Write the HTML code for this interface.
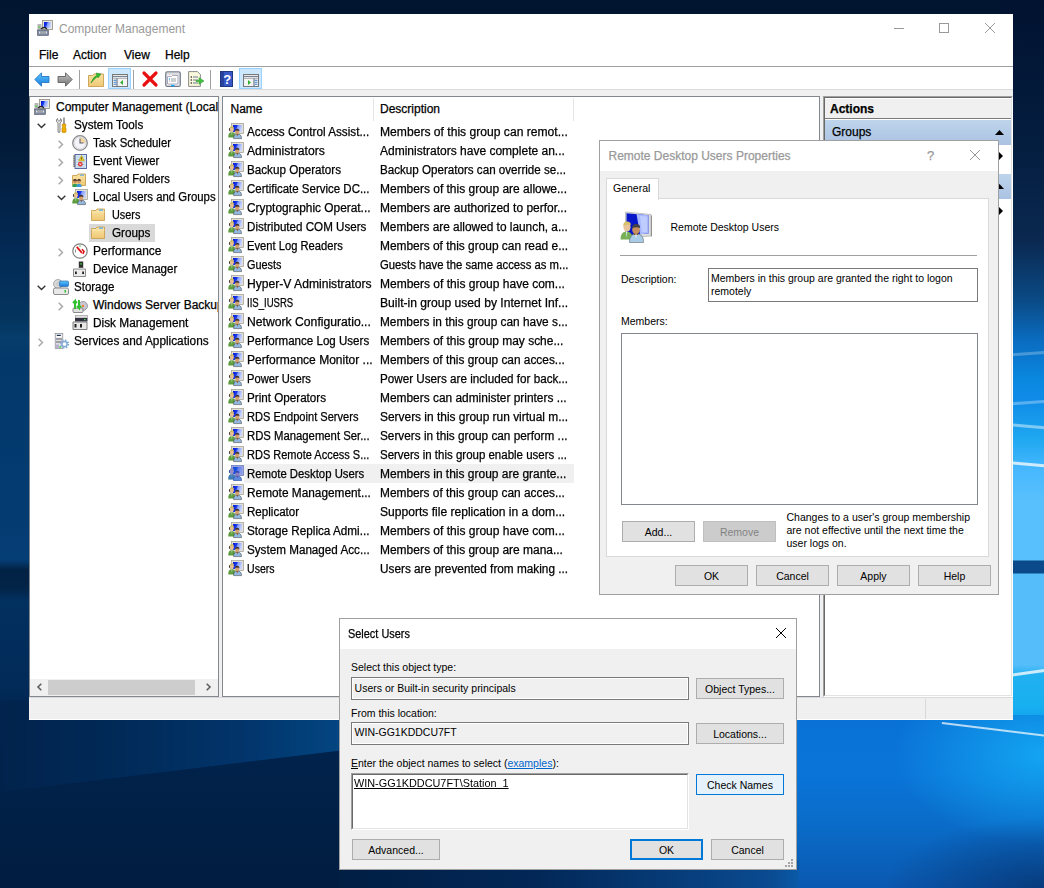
<!DOCTYPE html>
<html><head><meta charset="utf-8"><style>
*{margin:0;padding:0;box-sizing:border-box}
html,body{width:1044px;height:888px;overflow:hidden}
body{position:relative;font-family:"Liberation Sans",sans-serif;font-size:12px;color:#000;background:#04203f}
.a{position:absolute}
.t{position:absolute;white-space:nowrap;line-height:1;-webkit-text-stroke:0.25px currentColor}
svg.a{overflow:visible}
</style></head><body>
<svg width="0" height="0" style="position:absolute"><defs>
<linearGradient id="gscr" x1="0" y1="0" x2="1" y2="0.3"><stop offset="0" stop-color="#0010d8"/><stop offset=".45" stop-color="#2040e8"/><stop offset=".55" stop-color="#8098ff"/><stop offset="1" stop-color="#c8d4ff"/></linearGradient>
<linearGradient id="gfold" x1="0" y1="0" x2="0" y2="1"><stop offset="0" stop-color="#fbe4a6"/><stop offset="1" stop-color="#eec874"/></linearGradient>
<linearGradient id="gblue" x1="0" y1="0" x2="0" y2="1"><stop offset="0" stop-color="#5cc8ff"/><stop offset="1" stop-color="#1878d8"/></linearGradient>
<linearGradient id="ggray" x1="0" y1="0" x2="0" y2="1"><stop offset="0" stop-color="#c8c8c8"/><stop offset="1" stop-color="#707070"/></linearGradient>
<linearGradient id="gband" x1="0" y1="0" x2="0" y2="1"><stop offset="0" stop-color="#c5d8ee"/><stop offset="1" stop-color="#a9c3e2"/></linearGradient>
<filter id="tint" x="0" y="0" width="1" height="1"><feFlood flood-color="#1a5ce0" flood-opacity=".6"/><feComposite in2="SourceAlpha" operator="in" result="f"/><feMerge><feMergeNode in="SourceGraphic"/><feMergeNode in="f"/></feMerge></filter>
</defs></svg>
<div class="a" style="left:0;top:0;width:1044px;height:888px;overflow:hidden"><div class="a" style="left:0;top:0;width:1044px;height:888px;background:linear-gradient(180deg,#011530 0px,#021b3a 150px,#032a55 250px,#04355f 320px,#063d6c 338px,#03386a 360px,#043c72 520px,#053d75 560px,#022244 570px,#022447 588px,#02305f 600px,#022a58 690px,#01234c 720px,#012148 800px,#011c40 888px)"></div><div class="a" style="left:1000px;top:0;width:44px;height:888px;background:linear-gradient(180deg,#021230 0px,#041e40 150px,#0a2850 240px,#0a4a85 300px,#0a6cc0 340px,#0a88e0 380px,#108ce8 400px,#20a8f0 440px,#48b8ff 470px,#58c0fc 500px,#58c0fc 560px,#0a4a8a 561px,#0a4a8a 573px,#55bdfa 574px,#55bdfa 665px,#20b0f0 675px,#18b0f0 705px,#0a8ae8 745px,#0a80e0 790px,#0a78d0 800px,#0a5aa8 840px,#0a3a70 888px)"></div><div class="a" style="left:1005px;top:352px;width:50px;height:3px;background:rgba(255,255,255,0.25);transform:rotate(-4deg);filter:blur(.7px)"></div><div class="a" style="left:1005px;top:401px;width:50px;height:3px;background:rgba(255,255,255,0.3);transform:rotate(-4deg);filter:blur(.7px)"></div><div class="a" style="left:1005px;top:425px;width:50px;height:3px;background:rgba(255,255,255,0.45);transform:rotate(5deg);filter:blur(.7px)"></div><div class="a" style="left:1005px;top:463px;width:50px;height:3px;background:rgba(255,255,255,0.75);transform:rotate(5deg);filter:blur(.7px)"></div><div class="a" style="left:1005px;top:671px;width:50px;height:3px;background:rgba(255,255,255,0.75);transform:rotate(-8deg);filter:blur(.7px)"></div><div class="a" style="left:1005px;top:731px;width:50px;height:3px;background:rgba(255,255,255,0.4);transform:rotate(5deg);filter:blur(.7px)"></div><div class="a" style="left:790px;top:715px;width:254px;height:173px;background:linear-gradient(180deg,#0a72d6 0px,#0a74d8 60px,#0a6cc8 110px,#0a58b0 173px)"></div><div class="a" style="left:790px;top:715px;width:254px;height:173px;background:radial-gradient(ellipse 150px 90px at 254px 40px,rgba(20,170,245,.9),rgba(20,150,240,0) 100%)"></div><div class="a" style="left:790px;top:715px;width:254px;height:173px;background:radial-gradient(ellipse 160px 70px at 254px 173px,rgba(5,40,90,.6),rgba(5,40,90,0) 100%)"></div><div class="a" style="left:942px;top:722px;width:110px;height:2px;background:rgba(255,255,255,.7);transform:rotate(7deg);transform-origin:0 0;filter:blur(.6px)"></div><div class="a" style="left:339px;top:860px;width:460px;height:28px;background:linear-gradient(90deg,#011e43 0px,#022858 200px,#0a4a90 430px,#0a5aa8 460px)"></div><div class="a" style="left:0;top:700px;width:345px;height:100px;filter:blur(2px);clip-path:polygon(0 0,345px 0,345px 50px,0 92px);background:linear-gradient(90deg,#01234c 0px,#012a58 120px,#02346a 240px,#034682 345px)"></div></div>
<div class="a" style="left:29px;top:14px;width:984px;height:706px;background:#fff;"></div>
<svg class="a" style="left:37px;top:20px" width="16" height="16" viewBox="0 0 16 16"><rect x="5.5" y="0.5" width="10" height="9" fill="#e8e8e0" stroke="#8a8a80" stroke-width=".8"/><rect x="7" y="2" width="7" height="6" fill="url(#gscr)"/><rect x="0.5" y="4" width="4" height="6" fill="#b8b8b8"/><rect x="1.2" y="6.5" width="2" height="1.2" fill="#50d040"/><path d="M4 9 Q7 6 10 9" stroke="#222" stroke-width="1.2" fill="none"/><rect x="0.5" y="10" width="11" height="5.5" fill="#7b8aa0" stroke="#556" stroke-width=".6"/><rect x="2" y="11.5" width="8" height="2" fill="#e0e4ea"/><path d="M4 11.5v2M6 11.5v2M8 11.5v2" stroke="#333" stroke-width=".7"/></svg>
<div class="t" style="left:59px;top:22.84px;font-size:12px;color:#999;-webkit-text-stroke:0">Computer Management</div>
<svg class="a" style="left:894px;top:28px" width="10" height="1" viewBox="0 0 10 1"><rect width="10" height="1" fill="#999"/></svg>
<svg class="a" style="left:939px;top:23px" width="10" height="10" viewBox="0 0 10 10"><rect x=".5" y=".5" width="9" height="9" fill="none" stroke="#999"/></svg>
<svg class="a" style="left:985px;top:23px" width="10" height="10" viewBox="0 0 10 10"><path d="M0 0L10 10M10 0L0 10" stroke="#999" stroke-width="1"/></svg>
<div class="t" style="left:39px;top:48.54px;font-size:12px;color:#000;">File</div>
<div class="t" style="left:73px;top:48.54px;font-size:12px;color:#000;">Action</div>
<div class="t" style="left:124px;top:48.54px;font-size:12px;color:#000;">View</div>
<div class="t" style="left:165px;top:48.54px;font-size:12px;color:#000;">Help</div>
<div class="a" style="left:29px;top:66px;width:984px;height:1px;background:#a0a0a0;"></div>
<div class="a" style="left:29px;top:89px;width:984px;height:1px;background:#dadbdc;"></div>
<div class="a" style="left:29px;top:90px;width:984px;height:629px;background:#f0f0f0;"></div>
<div class="a" style="left:29px;top:96px;width:190px;height:601px;background:#fff;border:1px solid #828790;"></div>
<div class="a" style="left:222px;top:96px;width:598px;height:601px;background:#fff;border:1px solid #828790;"></div>
<div class="a" style="left:823px;top:96px;width:190px;height:601px;background:#fff;border-top:1px solid #a0a0a0;border-left:1px solid #a0a0a0;border-right:1px solid #fff;border-bottom:1px solid #fff"></div>
<div class="a" style="left:824px;top:97px;width:188px;height:599px;border-top:1px solid #696969;border-left:1px solid #696969;border-right:1px solid #e3e3e3;border-bottom:1px solid #e3e3e3"></div>
<div class="a" style="left:29px;top:697px;width:984px;height:1px;background:#d9d9d9;"></div>
<div class="a" style="left:925px;top:699px;width:1px;height:20px;background:#d9d9d9;"></div>
<svg class="a" style="left:34px;top:72px" width="16" height="15" viewBox="0 0 16 15"><path d="M0.8 7.5 L7.5 0.8 L7.5 4.5 L15 4.5 L15 10.5 L7.5 10.5 L7.5 14.2Z" fill="url(#gblue)" stroke="#2878c8" stroke-width=".9"/></svg>
<svg class="a" style="left:57px;top:72px" width="16" height="15" viewBox="0 0 16 15"><path d="M15.2 7.5 L8.5 0.8 L8.5 4.5 L1 4.5 L1 10.5 L8.5 10.5 L8.5 14.2Z" fill="url(#ggray)" stroke="#606060" stroke-width=".9"/></svg>
<div class="a" style="left:79px;top:70px;width:1px;height:19px;background:#a0a0a0;"></div>
<svg class="a" style="left:88px;top:71px" width="16" height="16" viewBox="0 0 16 16"><path d="M0.5 4.5 L5 4.5 L6 3 L15.5 3 L15.5 15.5 L0.5 15.5Z" fill="url(#gfold)" stroke="#c8a050" stroke-width=".9"/><path d="M3 12 Q5 6 9 4 L8 2 L13 3 L10 7 L9.5 5.5 Q6 8 3 12Z" fill="#30c030" stroke="#208020" stroke-width=".5"/></svg>
<div class="a" style="left:108px;top:68px;width:23px;height:21px;background:#cce8ff;border:1px solid #99d1ff;"></div>
<svg class="a" style="left:112px;top:74px" width="16" height="13" viewBox="0 0 16 13"><rect x=".5" y=".5" width="15" height="12" fill="#f4f4f4" stroke="#787878"/><path d="M1 1.6h14" stroke="#e8e8e8" stroke-width="1"/><path d="M1 2.6h15" stroke="#687890" stroke-width="1"/><path d="M1 3.6h14" stroke="#e0e0e0" stroke-width="1"/><path d="M1 4.5h14" stroke="#909090" stroke-width=".6"/><path d="M5 4.5v8" stroke="#687890" stroke-width="1.2"/><path d="M2 6.3h1.8M2 8.3h1.8M2 10.3h1.8" stroke="#3a80c8" stroke-width="1.1" stroke-linecap="round"/><path d="M11 6L8 8.5L11 11Z" fill="#30b030"/></svg>
<div class="a" style="left:133px;top:70px;width:1px;height:19px;background:#a0a0a0;"></div>
<svg class="a" style="left:142px;top:71px" width="16" height="16" viewBox="0 0 16 16"><path d="M2 2L14 14M14 2L2 14" stroke="#e81010" stroke-width="3.2" stroke-linecap="round"/></svg>
<svg class="a" style="left:165px;top:71px" width="16" height="16" viewBox="0 0 16 16"><rect x=".8" y=".8" width="14.4" height="14.6" rx="1.5" fill="#f8f8f8" stroke="#707888" stroke-width="1.3"/><path d="M2 3h12" stroke="#b0b0b8" stroke-width=".8"/><path d="M2.5 5.5h4l1 -1h5.5v8.5h-10.5Z" fill="#fff" stroke="#9890b0" stroke-width=".8"/><circle cx="4.5" cy="8" r=".7" fill="#10a0f0"/><path d="M6 8h5M6 10h5" stroke="#808890" stroke-width=".8"/><circle cx="4.5" cy="10" r=".6" fill="#909090"/><rect x="6" y="13.8" width="3.5" height="1.5" fill="#10a8f8"/></svg>
<svg class="a" style="left:188px;top:71px" width="17" height="16" viewBox="0 0 17 16"><path d="M.6 .6L9.5 .6L12.4 3.5L12.4 15.4L.6 15.4Z" fill="#fcf8dc" stroke="#8a8a8a" stroke-width="1"/><circle cx="3.3" cy="6" r=".8" fill="#222"/><circle cx="3.3" cy="9" r=".8" fill="#222"/><circle cx="3.3" cy="12" r=".8" fill="#222"/><path d="M5 6h5M5 9h5M5 12h5" stroke="#5a6a8a" stroke-width=".9"/><path d="M8 9.5h3v-2.8l5 3.3l-5 3.3v-2.8h-3Z" fill="#40c040" stroke="#30a030" stroke-width=".6"/></svg>
<div class="a" style="left:210px;top:70px;width:1px;height:19px;background:#a0a0a0;"></div>
<svg class="a" style="left:220px;top:71px" width="13" height="16" viewBox="0 0 13 16"><rect x=".5" y=".5" width="12" height="15" fill="#3858c8" stroke="#203880"/><rect x="1" y="1" width="3" height="14" fill="#2840a0"/><text x="7.3" y="13" font-family="Liberation Sans" font-weight="bold" font-size="13" fill="#fff" text-anchor="middle">?</text></svg>
<div class="a" style="left:239px;top:68px;width:23px;height:21px;background:#cce8ff;border:1px solid #99d1ff;"></div>
<svg class="a" style="left:243px;top:74px" width="16" height="13" viewBox="0 0 16 13"><rect x=".5" y=".5" width="15" height="12" fill="#f4f4f4" stroke="#787878"/><path d="M1 1.6h14" stroke="#e8e8e8" stroke-width="1"/><path d="M1 2.6h15" stroke="#687890" stroke-width="1"/><path d="M1 3.6h14" stroke="#e0e0e0" stroke-width="1"/><path d="M1 4.5h14" stroke="#909090" stroke-width=".6"/><path d="M11 4.5v8" stroke="#687890" stroke-width="1.2"/><path d="M12.3 6.3h1.8M12.3 8.3h1.8M12.3 10.3h1.8" stroke="#3a80c8" stroke-width="1.1" stroke-linecap="round"/><path d="M5 6L8 8.5L5 11Z" fill="#30b030"/></svg>
<div class="a" style="left:30px;top:97px;width:188px;height:582px;overflow:hidden"><div class="a" style="left:-30px;top:-97px;width:300px;height:700px"><div class="a" style="left:89px;top:224px;width:66px;height:18px;background:#d9d9d9;"></div><svg class="a" style="left:34px;top:99px" width="16" height="16" viewBox="0 0 16 16"><rect x="5.5" y="0.5" width="10" height="9" fill="#e8e8e0" stroke="#8a8a80" stroke-width=".8"/><rect x="7" y="2" width="7" height="6" fill="url(#gscr)"/><rect x="0.5" y="4" width="4" height="6" fill="#b8b8b8"/><rect x="1.2" y="6.5" width="2" height="1.2" fill="#50d040"/><path d="M4 9 Q7 6 10 9" stroke="#222" stroke-width="1.2" fill="none"/><rect x="0.5" y="10" width="11" height="5.5" fill="#7b8aa0" stroke="#556" stroke-width=".6"/><rect x="2" y="11.5" width="8" height="2" fill="#e0e4ea"/><path d="M4 11.5v2M6 11.5v2M8 11.5v2" stroke="#333" stroke-width=".7"/></svg><div class="t" style="left:56px;top:100.64px;font-size:12px;color:#000;transform:scaleX(1.0);transform-origin:0 0;">Computer Management (Local)</div><svg class="a" style="left:37px;top:123px" width="9" height="6" viewBox="0 0 9 6"><path d="M0.7 0.7 L4.5 4.5 L8.3 0.7" stroke="#333" stroke-width="1.4" fill="none"/></svg><svg class="a" style="left:55px;top:117px" width="12" height="16" viewBox="0 0 12 16"><path d="M2.5 1.5 Q1 2.5 1.5 4.5 Q2.2 5.8 3 6 L3 15 Q4 16 5 15 L5 6 Q6.2 5.5 6.5 4 Q6.7 2.2 5.5 1.5 L5.3 3.5 L3.8 4 L2.8 3.2Z" fill="#e4e4e4" stroke="#707070" stroke-width=".8"/><path d="M9 0.5 L9 7" stroke="#606060" stroke-width="1.2"/><path d="M7.5 7 L10.5 7 L11 9 L10 10 L11 11 L11 15 Q9 16.5 7 15 L7 11 L8 10 L7 9Z" fill="#f0b000" stroke="#c07800" stroke-width=".6"/></svg><div class="t" style="left:74px;top:118.64px;font-size:12px;color:#000;transform:scaleX(0.9732);transform-origin:0 0;">System Tools</div><svg class="a" style="left:58px;top:140px" width="6" height="9" viewBox="0 0 6 9"><path d="M0.7 0.7 L4.5 4.5 L0.7 8.3" stroke="#a6a6a6" stroke-width="1.4" fill="none"/></svg><svg class="a" style="left:72px;top:135px" width="16" height="16" viewBox="0 0 16 16"><circle cx="8" cy="8" r="7.3" fill="#f4f4f8" stroke="#8a8a8a" stroke-width="1.3"/><path d="M8 8 L8 2.2 A5.8 5.8 0 0 1 13.8 8Z" fill="#f2d8a0"/><circle cx="8" cy="8" r="5.8" fill="none" stroke="#c8c8d0" stroke-width=".6"/><path d="M8 3.5 L8 8 L11.5 8" stroke="#606070" stroke-width="1.1" fill="none"/></svg><div class="t" style="left:93px;top:136.64px;font-size:12px;color:#000;transform:scaleX(0.9512);transform-origin:0 0;">Task Scheduler</div><svg class="a" style="left:58px;top:158px" width="6" height="9" viewBox="0 0 6 9"><path d="M0.7 0.7 L4.5 4.5 L0.7 8.3" stroke="#a6a6a6" stroke-width="1.4" fill="none"/></svg><svg class="a" style="left:73px;top:154px" width="14" height="15" viewBox="0 0 14 15"><rect x="2" y="0.5" width="11.5" height="14" fill="#d4e6f4" stroke="#4a5a98" stroke-width=".9"/><path d="M3.5 3h8.5M3.5 5.5h8.5M3.5 8h8.5M3.5 10.5h8.5M3.5 13h8.5" stroke="#a8c8e0" stroke-width=".8"/><path d="M1.2 1.5v12" stroke="#606060" stroke-width="2" stroke-dasharray="1.2 .8"/><path d="M8.5 1.5 L11.3 6.8 L5.7 6.8Z" fill="#f0d020" stroke="#b09000" stroke-width=".5"/><path d="M8.5 3.5v2" stroke="#333" stroke-width=".8"/><circle cx="7.3" cy="10.2" r="2.4" fill="#e03a3a"/><path d="M6.4 9.3l1.8 1.8M8.2 9.3l-1.8 1.8" stroke="#fff" stroke-width=".7"/></svg><div class="t" style="left:93px;top:154.64px;font-size:12px;color:#000;transform:scaleX(0.9394);transform-origin:0 0;">Event Viewer</div><svg class="a" style="left:58px;top:176px" width="6" height="9" viewBox="0 0 6 9"><path d="M0.7 0.7 L4.5 4.5 L0.7 8.3" stroke="#a6a6a6" stroke-width="1.4" fill="none"/></svg><svg class="a" style="left:72px;top:173px" width="14" height="14" viewBox="0 0 14 14"><path d="M0.5 2.5 L5 2.5 L6 1 L13.5 1 L13.5 12.5 L0.5 12.5Z" fill="url(#gfold)" stroke="#c8a050" stroke-width=".9"/><rect x="8" y="1.6" width="4" height="1" fill="#40a0f0"/><path d="M0.3 14 Q0.3 10.8 3 10.8 Q5.7 10.8 5.7 14Z" fill="#30a050"/><circle cx="3" cy="8.3" r="1.9" fill="#c88858"/><path d="M1.1 8 Q1.2 6 3 6 Q4.9 6 4.9 8 Q3 7 1.1 8Z" fill="#302020"/><path d="M4.3 14 Q4.3 10.8 7 10.8 Q9.7 10.8 9.7 14Z" fill="#3a98d8"/><circle cx="7" cy="8.3" r="1.9" fill="#d09868"/><path d="M5.1 8 Q5.2 6 7 6 Q8.9 6 8.9 8 Q7 7 5.1 8Z" fill="#302020"/></svg><div class="t" style="left:93px;top:172.64px;font-size:12px;color:#000;transform:scaleX(0.9354);transform-origin:0 0;">Shared Folders</div><svg class="a" style="left:57px;top:195px" width="9" height="6" viewBox="0 0 9 6"><path d="M0.7 0.7 L4.5 4.5 L8.3 0.7" stroke="#333" stroke-width="1.4" fill="none"/></svg><svg class="a" style="left:72px;top:189px" width="16" height="16" viewBox="0 0 16 16"><rect x="3.5" y="0.5" width="12" height="10" fill="#e2e0d4" stroke="#9a9a90" stroke-width=".7"/><rect x="5" y="2" width="9" height="7" fill="url(#gscr)"/><path d="M0.3 14.5 Q0 9.3 3.8 9 Q7.5 9.3 7.2 14.5Z" fill="#5c9c3c"/><path d="M3.4 9.3 L4.2 9.3 L4 13 Z" fill="#e8f0e0"/><ellipse cx="3.9" cy="6.3" rx="2" ry="2.6" fill="#e8c090"/><path d="M1.6 5.6 Q1.8 3.2 4 3.3 Q6 3.4 6.1 5.3 Q4 4.2 1.6 5.6Z" fill="#c8b858"/><path d="M1.5 5.2 Q1 7.5 2.2 8.3" stroke="#202020" stroke-width=".9" fill="none"/><path d="M5.6 15.6 Q5.3 11.2 9.4 11 Q13.7 11.2 13.5 15.6Z" fill="#90b8e0" stroke="#303030" stroke-width=".5"/><ellipse cx="9.2" cy="8.6" rx="2.1" ry="2.7" fill="#d0a070"/><path d="M7 8 Q7 5.6 9.4 5.7 Q11.6 5.9 11.4 8 Q9.4 6.8 7 8Z" fill="#3a3030"/><path d="M8.4 11 L10.2 11 L9.3 13.6Z" fill="#8a5a30"/></svg><div class="t" style="left:93px;top:190.64px;font-size:12px;color:#000;transform:scaleX(0.9473);transform-origin:0 0;">Local Users and Groups</div><svg class="a" style="left:91px;top:208px" width="14" height="13" viewBox="0 0 14 13"><path d="M0.5 2.5 L5 2.5 L6 1 L13.5 1 L13.5 12.5 L0.5 12.5Z" fill="url(#gfold)" stroke="#c8a050" stroke-width=".9"/><rect x="8" y="1.5" width="4" height="1.2" fill="#4aa8f0"/><path d="M0.5 4 L13.5 4" stroke="#f8e8b8" stroke-width=".8"/></svg><div class="t" style="left:112px;top:208.64px;font-size:12px;color:#000;transform:scaleX(0.9032);transform-origin:0 0;">Users</div><svg class="a" style="left:91px;top:226px" width="14" height="13" viewBox="0 0 14 13"><path d="M0.5 2.5 L5 2.5 L6 1 L13.5 1 L13.5 12.5 L0.5 12.5Z" fill="url(#gfold)" stroke="#c8a050" stroke-width=".9"/><rect x="8" y="1.5" width="4" height="1.2" fill="#4aa8f0"/><path d="M0.5 4 L13.5 4" stroke="#f8e8b8" stroke-width=".8"/></svg><div class="t" style="left:112px;top:226.64px;font-size:12px;color:#000;transform:scaleX(0.9769);transform-origin:0 0;">Groups</div><svg class="a" style="left:58px;top:248px" width="6" height="9" viewBox="0 0 6 9"><path d="M0.7 0.7 L4.5 4.5 L0.7 8.3" stroke="#a6a6a6" stroke-width="1.4" fill="none"/></svg><svg class="a" style="left:72px;top:243px" width="16" height="16" viewBox="0 0 16 16"><circle cx="8" cy="8" r="7.2" fill="#fff" stroke="#808080" stroke-width="1.2"/><path d="M3.5 6.5v3" stroke="#606060" stroke-width=".7"/><path d="M7 3 L9 3" stroke="#40a040" stroke-width=".8"/><path d="M4.8 3.8 L10 10" stroke="#e01010" stroke-width="1.8" fill="none"/><path d="M10 6.2 L12 8.5 L11 11" stroke="#e01010" stroke-width="1.5" fill="none"/></svg><div class="t" style="left:93px;top:244.64px;font-size:12px;color:#000;transform:scaleX(0.9971);transform-origin:0 0;">Performance</div><svg class="a" style="left:72px;top:261px" width="16" height="16" viewBox="0 0 16 16"><rect x="6.8" y="0.5" width="4.4" height="7" fill="#303030"/><rect x="8.3" y="2.2" width="1.4" height="1.4" fill="#40e040"/><path d="M1.5 8 L13.5 8 L13.5 15.5 L1.5 15.5Z" fill="#ececec" stroke="#808080" stroke-width=".9"/><path d="M6 8 L7 6.8 L11 6.8 L12 8" fill="#d0d0d0"/><rect x="3" y="10.5" width="1.8" height="2.6" fill="#222"/><rect x="10.2" y="10.5" width="1.8" height="2.6" fill="#222"/></svg><div class="t" style="left:93px;top:262.64px;font-size:12px;color:#000;transform:scaleX(0.9648);transform-origin:0 0;">Device Manager</div><svg class="a" style="left:37px;top:285px" width="9" height="6" viewBox="0 0 9 6"><path d="M0.7 0.7 L4.5 4.5 L8.3 0.7" stroke="#333" stroke-width="1.4" fill="none"/></svg><svg class="a" style="left:53px;top:279px" width="16" height="16" viewBox="0 0 16 16"><circle cx="5" cy="5" r="4.5" fill="#d8d8d8" stroke="#909090" stroke-width=".7"/><circle cx="5" cy="5" r="1.2" fill="#fff" stroke="#888" stroke-width=".5"/><rect x="6.5" y="2" width="9" height="5.5" rx="1" fill="url(#gblue)" stroke="#2060a0" stroke-width=".6"/><rect x="0.5" y="9" width="15" height="6.5" rx="1.5" fill="#e8e8e8" stroke="#808080" stroke-width=".9"/><rect x="11.5" y="11" width="1.5" height="2.5" fill="#30c030"/></svg><div class="t" style="left:74px;top:280.64px;font-size:12px;color:#000;transform:scaleX(0.9595);transform-origin:0 0;">Storage</div><svg class="a" style="left:58px;top:302px" width="6" height="9" viewBox="0 0 6 9"><path d="M0.7 0.7 L4.5 4.5 L0.7 8.3" stroke="#a6a6a6" stroke-width="1.4" fill="none"/></svg><svg class="a" style="left:72px;top:297px" width="16" height="16" viewBox="0 0 16 16"><circle cx="11" cy="9" r="4.5" fill="#c8c8d0" stroke="#808090" stroke-width=".7"/><circle cx="11" cy="9" r="1.2" fill="#f08040"/><rect x="1" y="11" width="10" height="4.5" rx="1" fill="#e0e0e0" stroke="#707070" stroke-width=".8"/><path d="M3 12 L3 4 L1 6 M3 4 L5 6" stroke="#30c030" stroke-width="2" fill="none"/><path d="M7 3 L7 11 L5 9 M7 11 L9 9" stroke="#30c030" stroke-width="2" fill="none"/></svg><div class="t" style="left:93px;top:298.64px;font-size:12px;color:#000;transform:scaleX(1.0);transform-origin:0 0;">Windows Server Backup</div><svg class="a" style="left:72px;top:315px" width="16" height="16" viewBox="0 0 16 16"><rect x="3.5" y="0.5" width="12" height="2.5" fill="#e0e0e0" stroke="#909090" stroke-width=".6"/><rect x="3" y="3" width="12.5" height="3.5" fill="#303040"/><rect x="12" y="4" width="1.5" height="1.2" fill="#40e040"/><path d="M1 7 L15 7 L15 14.5 L1 14.5Z" fill="#e8e8e8" stroke="#707070" stroke-width=".9"/><rect x="2.5" y="9" width="2" height="3.5" fill="#222"/><rect x="8" y="9" width="2" height="3.5" fill="#222"/></svg><div class="t" style="left:93px;top:316.64px;font-size:12px;color:#000;transform:scaleX(0.9866);transform-origin:0 0;">Disk Management</div><svg class="a" style="left:38px;top:338px" width="6" height="9" viewBox="0 0 6 9"><path d="M0.7 0.7 L4.5 4.5 L0.7 8.3" stroke="#a6a6a6" stroke-width="1.4" fill="none"/></svg><svg class="a" style="left:54px;top:333px" width="16" height="16" viewBox="0 0 16 16"><rect x="1.2" y="0.5" width="7.6" height="15" fill="#e0e0e4" stroke="#8a8a96" stroke-width=".7"/><rect x="2.3" y="1.5" width="5.4" height="3" fill="#fff"/><rect x="2.8" y="1.8" width="4" height="1.2" fill="#203050"/><path d="M2 6h6M2 9h6" stroke="#505060" stroke-width=".9"/><rect x="2" y="11.5" width="3" height="3.5" fill="#b8b0d0"/><rect x="5.2" y="13.2" width="2" height="1.5" fill="#40e040"/><circle cx="10.5" cy="11" r="3.7" fill="none" stroke="#86acd6" stroke-width="2" stroke-dasharray="1.45 1.45"/><circle cx="10.5" cy="11" r="2.6" fill="#fff" stroke="#86acd6" stroke-width="1.5"/></svg><div class="t" style="left:74px;top:334.64px;font-size:12px;color:#000;transform:scaleX(0.9846);transform-origin:0 0;">Services and Applications</div></div></div>
<div class="a" style="left:30px;top:679px;width:188px;height:17px;background:#f0f0f0;"></div>
<div class="a" style="left:48px;top:680px;width:147px;height:15px;background:#cdcdcd;"></div>
<svg class="a" style="left:37px;top:683px" width="5" height="8" viewBox="0 0 5 8"><path d="M4.3 .7L1 4L4.3 7.3" stroke="#606060" stroke-width="1.6" fill="none"/></svg>
<svg class="a" style="left:206px;top:683px" width="5" height="8" viewBox="0 0 5 8"><path d="M.7 .7L4 4L.7 7.3" stroke="#606060" stroke-width="1.6" fill="none"/></svg>
<div class="a" style="left:373px;top:98px;width:1px;height:23px;background:#e5e5e5;"></div>
<div class="a" style="left:573px;top:98px;width:1px;height:23px;background:#e5e5e5;"></div>
<div class="t" style="left:230.5px;top:103.34px;font-size:12px;color:#000;">Name</div>
<div class="t" style="left:380px;top:103.34px;font-size:12px;color:#000;">Description</div>
<svg class="a" style="left:228px;top:123px" width="16" height="16" viewBox="0 0 16 16"><rect x="3.5" y="0.5" width="12" height="10" fill="#e2e0d4" stroke="#9a9a90" stroke-width=".7"/><rect x="5" y="2" width="9" height="7" fill="url(#gscr)"/><path d="M0.3 14.5 Q0 9.3 3.8 9 Q7.5 9.3 7.2 14.5Z" fill="#5c9c3c"/><path d="M3.4 9.3 L4.2 9.3 L4 13 Z" fill="#e8f0e0"/><ellipse cx="3.9" cy="6.3" rx="2" ry="2.6" fill="#e8c090"/><path d="M1.6 5.6 Q1.8 3.2 4 3.3 Q6 3.4 6.1 5.3 Q4 4.2 1.6 5.6Z" fill="#c8b858"/><path d="M1.5 5.2 Q1 7.5 2.2 8.3" stroke="#202020" stroke-width=".9" fill="none"/><path d="M5.6 15.6 Q5.3 11.2 9.4 11 Q13.7 11.2 13.5 15.6Z" fill="#90b8e0" stroke="#303030" stroke-width=".5"/><ellipse cx="9.2" cy="8.6" rx="2.1" ry="2.7" fill="#d0a070"/><path d="M7 8 Q7 5.6 9.4 5.7 Q11.6 5.9 11.4 8 Q9.4 6.8 7 8Z" fill="#3a3030"/><path d="M8.4 11 L10.2 11 L9.3 13.6Z" fill="#8a5a30"/></svg>
<div class="t" style="left:246.5px;top:125.84px;font-size:12px;color:#000;transform:scaleX(0.9742);transform-origin:0 0;">Access Control Assist...</div>
<div class="t" style="left:380px;top:125.84px;font-size:12px;color:#000;transform:scaleX(1.0092);transform-origin:0 0;">Members of this group can remot...</div>
<svg class="a" style="left:228px;top:142px" width="16" height="16" viewBox="0 0 16 16"><rect x="3.5" y="0.5" width="12" height="10" fill="#e2e0d4" stroke="#9a9a90" stroke-width=".7"/><rect x="5" y="2" width="9" height="7" fill="url(#gscr)"/><path d="M0.3 14.5 Q0 9.3 3.8 9 Q7.5 9.3 7.2 14.5Z" fill="#5c9c3c"/><path d="M3.4 9.3 L4.2 9.3 L4 13 Z" fill="#e8f0e0"/><ellipse cx="3.9" cy="6.3" rx="2" ry="2.6" fill="#e8c090"/><path d="M1.6 5.6 Q1.8 3.2 4 3.3 Q6 3.4 6.1 5.3 Q4 4.2 1.6 5.6Z" fill="#c8b858"/><path d="M1.5 5.2 Q1 7.5 2.2 8.3" stroke="#202020" stroke-width=".9" fill="none"/><path d="M5.6 15.6 Q5.3 11.2 9.4 11 Q13.7 11.2 13.5 15.6Z" fill="#90b8e0" stroke="#303030" stroke-width=".5"/><ellipse cx="9.2" cy="8.6" rx="2.1" ry="2.7" fill="#d0a070"/><path d="M7 8 Q7 5.6 9.4 5.7 Q11.6 5.9 11.4 8 Q9.4 6.8 7 8Z" fill="#3a3030"/><path d="M8.4 11 L10.2 11 L9.3 13.6Z" fill="#8a5a30"/></svg>
<div class="t" style="left:246.5px;top:144.84px;font-size:12px;color:#000;transform:scaleX(1.0145);transform-origin:0 0;">Administrators</div>
<div class="t" style="left:380px;top:144.84px;font-size:12px;color:#000;transform:scaleX(1.0005);transform-origin:0 0;">Administrators have complete an...</div>
<svg class="a" style="left:228px;top:161px" width="16" height="16" viewBox="0 0 16 16"><rect x="3.5" y="0.5" width="12" height="10" fill="#e2e0d4" stroke="#9a9a90" stroke-width=".7"/><rect x="5" y="2" width="9" height="7" fill="url(#gscr)"/><path d="M0.3 14.5 Q0 9.3 3.8 9 Q7.5 9.3 7.2 14.5Z" fill="#5c9c3c"/><path d="M3.4 9.3 L4.2 9.3 L4 13 Z" fill="#e8f0e0"/><ellipse cx="3.9" cy="6.3" rx="2" ry="2.6" fill="#e8c090"/><path d="M1.6 5.6 Q1.8 3.2 4 3.3 Q6 3.4 6.1 5.3 Q4 4.2 1.6 5.6Z" fill="#c8b858"/><path d="M1.5 5.2 Q1 7.5 2.2 8.3" stroke="#202020" stroke-width=".9" fill="none"/><path d="M5.6 15.6 Q5.3 11.2 9.4 11 Q13.7 11.2 13.5 15.6Z" fill="#90b8e0" stroke="#303030" stroke-width=".5"/><ellipse cx="9.2" cy="8.6" rx="2.1" ry="2.7" fill="#d0a070"/><path d="M7 8 Q7 5.6 9.4 5.7 Q11.6 5.9 11.4 8 Q9.4 6.8 7 8Z" fill="#3a3030"/><path d="M8.4 11 L10.2 11 L9.3 13.6Z" fill="#8a5a30"/></svg>
<div class="t" style="left:246.5px;top:163.84px;font-size:12px;color:#000;transform:scaleX(0.9719);transform-origin:0 0;">Backup Operators</div>
<div class="t" style="left:380px;top:163.84px;font-size:12px;color:#000;transform:scaleX(0.9681);transform-origin:0 0;">Backup Operators can override se...</div>
<svg class="a" style="left:228px;top:180px" width="16" height="16" viewBox="0 0 16 16"><rect x="3.5" y="0.5" width="12" height="10" fill="#e2e0d4" stroke="#9a9a90" stroke-width=".7"/><rect x="5" y="2" width="9" height="7" fill="url(#gscr)"/><path d="M0.3 14.5 Q0 9.3 3.8 9 Q7.5 9.3 7.2 14.5Z" fill="#5c9c3c"/><path d="M3.4 9.3 L4.2 9.3 L4 13 Z" fill="#e8f0e0"/><ellipse cx="3.9" cy="6.3" rx="2" ry="2.6" fill="#e8c090"/><path d="M1.6 5.6 Q1.8 3.2 4 3.3 Q6 3.4 6.1 5.3 Q4 4.2 1.6 5.6Z" fill="#c8b858"/><path d="M1.5 5.2 Q1 7.5 2.2 8.3" stroke="#202020" stroke-width=".9" fill="none"/><path d="M5.6 15.6 Q5.3 11.2 9.4 11 Q13.7 11.2 13.5 15.6Z" fill="#90b8e0" stroke="#303030" stroke-width=".5"/><ellipse cx="9.2" cy="8.6" rx="2.1" ry="2.7" fill="#d0a070"/><path d="M7 8 Q7 5.6 9.4 5.7 Q11.6 5.9 11.4 8 Q9.4 6.8 7 8Z" fill="#3a3030"/><path d="M8.4 11 L10.2 11 L9.3 13.6Z" fill="#8a5a30"/></svg>
<div class="t" style="left:246.5px;top:182.84px;font-size:12px;color:#000;transform:scaleX(0.9567);transform-origin:0 0;">Certificate Service DC...</div>
<div class="t" style="left:380px;top:182.84px;font-size:12px;color:#000;transform:scaleX(0.9978);transform-origin:0 0;">Members of this group are allowe...</div>
<svg class="a" style="left:228px;top:199px" width="16" height="16" viewBox="0 0 16 16"><rect x="3.5" y="0.5" width="12" height="10" fill="#e2e0d4" stroke="#9a9a90" stroke-width=".7"/><rect x="5" y="2" width="9" height="7" fill="url(#gscr)"/><path d="M0.3 14.5 Q0 9.3 3.8 9 Q7.5 9.3 7.2 14.5Z" fill="#5c9c3c"/><path d="M3.4 9.3 L4.2 9.3 L4 13 Z" fill="#e8f0e0"/><ellipse cx="3.9" cy="6.3" rx="2" ry="2.6" fill="#e8c090"/><path d="M1.6 5.6 Q1.8 3.2 4 3.3 Q6 3.4 6.1 5.3 Q4 4.2 1.6 5.6Z" fill="#c8b858"/><path d="M1.5 5.2 Q1 7.5 2.2 8.3" stroke="#202020" stroke-width=".9" fill="none"/><path d="M5.6 15.6 Q5.3 11.2 9.4 11 Q13.7 11.2 13.5 15.6Z" fill="#90b8e0" stroke="#303030" stroke-width=".5"/><ellipse cx="9.2" cy="8.6" rx="2.1" ry="2.7" fill="#d0a070"/><path d="M7 8 Q7 5.6 9.4 5.7 Q11.6 5.9 11.4 8 Q9.4 6.8 7 8Z" fill="#3a3030"/><path d="M8.4 11 L10.2 11 L9.3 13.6Z" fill="#8a5a30"/></svg>
<div class="t" style="left:246.5px;top:201.84px;font-size:12px;color:#000;transform:scaleX(0.9903);transform-origin:0 0;">Cryptographic Operat...</div>
<div class="t" style="left:380px;top:201.84px;font-size:12px;color:#000;transform:scaleX(0.9978);transform-origin:0 0;">Members are authorized to perfor...</div>
<svg class="a" style="left:228px;top:218px" width="16" height="16" viewBox="0 0 16 16"><rect x="3.5" y="0.5" width="12" height="10" fill="#e2e0d4" stroke="#9a9a90" stroke-width=".7"/><rect x="5" y="2" width="9" height="7" fill="url(#gscr)"/><path d="M0.3 14.5 Q0 9.3 3.8 9 Q7.5 9.3 7.2 14.5Z" fill="#5c9c3c"/><path d="M3.4 9.3 L4.2 9.3 L4 13 Z" fill="#e8f0e0"/><ellipse cx="3.9" cy="6.3" rx="2" ry="2.6" fill="#e8c090"/><path d="M1.6 5.6 Q1.8 3.2 4 3.3 Q6 3.4 6.1 5.3 Q4 4.2 1.6 5.6Z" fill="#c8b858"/><path d="M1.5 5.2 Q1 7.5 2.2 8.3" stroke="#202020" stroke-width=".9" fill="none"/><path d="M5.6 15.6 Q5.3 11.2 9.4 11 Q13.7 11.2 13.5 15.6Z" fill="#90b8e0" stroke="#303030" stroke-width=".5"/><ellipse cx="9.2" cy="8.6" rx="2.1" ry="2.7" fill="#d0a070"/><path d="M7 8 Q7 5.6 9.4 5.7 Q11.6 5.9 11.4 8 Q9.4 6.8 7 8Z" fill="#3a3030"/><path d="M8.4 11 L10.2 11 L9.3 13.6Z" fill="#8a5a30"/></svg>
<div class="t" style="left:246.5px;top:220.84px;font-size:12px;color:#000;transform:scaleX(0.9675);transform-origin:0 0;">Distributed COM Users</div>
<div class="t" style="left:380px;top:220.84px;font-size:12px;color:#000;transform:scaleX(0.9878);transform-origin:0 0;">Members are allowed to launch, a...</div>
<svg class="a" style="left:228px;top:237px" width="16" height="16" viewBox="0 0 16 16"><rect x="3.5" y="0.5" width="12" height="10" fill="#e2e0d4" stroke="#9a9a90" stroke-width=".7"/><rect x="5" y="2" width="9" height="7" fill="url(#gscr)"/><path d="M0.3 14.5 Q0 9.3 3.8 9 Q7.5 9.3 7.2 14.5Z" fill="#5c9c3c"/><path d="M3.4 9.3 L4.2 9.3 L4 13 Z" fill="#e8f0e0"/><ellipse cx="3.9" cy="6.3" rx="2" ry="2.6" fill="#e8c090"/><path d="M1.6 5.6 Q1.8 3.2 4 3.3 Q6 3.4 6.1 5.3 Q4 4.2 1.6 5.6Z" fill="#c8b858"/><path d="M1.5 5.2 Q1 7.5 2.2 8.3" stroke="#202020" stroke-width=".9" fill="none"/><path d="M5.6 15.6 Q5.3 11.2 9.4 11 Q13.7 11.2 13.5 15.6Z" fill="#90b8e0" stroke="#303030" stroke-width=".5"/><ellipse cx="9.2" cy="8.6" rx="2.1" ry="2.7" fill="#d0a070"/><path d="M7 8 Q7 5.6 9.4 5.7 Q11.6 5.9 11.4 8 Q9.4 6.8 7 8Z" fill="#3a3030"/><path d="M8.4 11 L10.2 11 L9.3 13.6Z" fill="#8a5a30"/></svg>
<div class="t" style="left:246.5px;top:239.84px;font-size:12px;color:#000;transform:scaleX(0.9324);transform-origin:0 0;">Event Log Readers</div>
<div class="t" style="left:380px;top:239.84px;font-size:12px;color:#000;transform:scaleX(0.9931);transform-origin:0 0;">Members of this group can read e...</div>
<svg class="a" style="left:228px;top:256px" width="16" height="16" viewBox="0 0 16 16"><rect x="3.5" y="0.5" width="12" height="10" fill="#e2e0d4" stroke="#9a9a90" stroke-width=".7"/><rect x="5" y="2" width="9" height="7" fill="url(#gscr)"/><path d="M0.3 14.5 Q0 9.3 3.8 9 Q7.5 9.3 7.2 14.5Z" fill="#5c9c3c"/><path d="M3.4 9.3 L4.2 9.3 L4 13 Z" fill="#e8f0e0"/><ellipse cx="3.9" cy="6.3" rx="2" ry="2.6" fill="#e8c090"/><path d="M1.6 5.6 Q1.8 3.2 4 3.3 Q6 3.4 6.1 5.3 Q4 4.2 1.6 5.6Z" fill="#c8b858"/><path d="M1.5 5.2 Q1 7.5 2.2 8.3" stroke="#202020" stroke-width=".9" fill="none"/><path d="M5.6 15.6 Q5.3 11.2 9.4 11 Q13.7 11.2 13.5 15.6Z" fill="#90b8e0" stroke="#303030" stroke-width=".5"/><ellipse cx="9.2" cy="8.6" rx="2.1" ry="2.7" fill="#d0a070"/><path d="M7 8 Q7 5.6 9.4 5.7 Q11.6 5.9 11.4 8 Q9.4 6.8 7 8Z" fill="#3a3030"/><path d="M8.4 11 L10.2 11 L9.3 13.6Z" fill="#8a5a30"/></svg>
<div class="t" style="left:246.5px;top:258.84px;font-size:12px;color:#000;transform:scaleX(0.9053);transform-origin:0 0;">Guests</div>
<div class="t" style="left:380px;top:258.84px;font-size:12px;color:#000;transform:scaleX(0.9417);transform-origin:0 0;">Guests have the same access as m...</div>
<svg class="a" style="left:228px;top:275px" width="16" height="16" viewBox="0 0 16 16"><rect x="3.5" y="0.5" width="12" height="10" fill="#e2e0d4" stroke="#9a9a90" stroke-width=".7"/><rect x="5" y="2" width="9" height="7" fill="url(#gscr)"/><path d="M0.3 14.5 Q0 9.3 3.8 9 Q7.5 9.3 7.2 14.5Z" fill="#5c9c3c"/><path d="M3.4 9.3 L4.2 9.3 L4 13 Z" fill="#e8f0e0"/><ellipse cx="3.9" cy="6.3" rx="2" ry="2.6" fill="#e8c090"/><path d="M1.6 5.6 Q1.8 3.2 4 3.3 Q6 3.4 6.1 5.3 Q4 4.2 1.6 5.6Z" fill="#c8b858"/><path d="M1.5 5.2 Q1 7.5 2.2 8.3" stroke="#202020" stroke-width=".9" fill="none"/><path d="M5.6 15.6 Q5.3 11.2 9.4 11 Q13.7 11.2 13.5 15.6Z" fill="#90b8e0" stroke="#303030" stroke-width=".5"/><ellipse cx="9.2" cy="8.6" rx="2.1" ry="2.7" fill="#d0a070"/><path d="M7 8 Q7 5.6 9.4 5.7 Q11.6 5.9 11.4 8 Q9.4 6.8 7 8Z" fill="#3a3030"/><path d="M8.4 11 L10.2 11 L9.3 13.6Z" fill="#8a5a30"/></svg>
<div class="t" style="left:246.5px;top:277.84px;font-size:12px;color:#000;transform:scaleX(1.0089);transform-origin:0 0;">Hyper-V Administrators</div>
<div class="t" style="left:380px;top:277.84px;font-size:12px;color:#000;transform:scaleX(1.0005);transform-origin:0 0;">Members of this group have com...</div>
<svg class="a" style="left:228px;top:294px" width="16" height="16" viewBox="0 0 16 16"><rect x="3.5" y="0.5" width="12" height="10" fill="#e2e0d4" stroke="#9a9a90" stroke-width=".7"/><rect x="5" y="2" width="9" height="7" fill="url(#gscr)"/><path d="M0.3 14.5 Q0 9.3 3.8 9 Q7.5 9.3 7.2 14.5Z" fill="#5c9c3c"/><path d="M3.4 9.3 L4.2 9.3 L4 13 Z" fill="#e8f0e0"/><ellipse cx="3.9" cy="6.3" rx="2" ry="2.6" fill="#e8c090"/><path d="M1.6 5.6 Q1.8 3.2 4 3.3 Q6 3.4 6.1 5.3 Q4 4.2 1.6 5.6Z" fill="#c8b858"/><path d="M1.5 5.2 Q1 7.5 2.2 8.3" stroke="#202020" stroke-width=".9" fill="none"/><path d="M5.6 15.6 Q5.3 11.2 9.4 11 Q13.7 11.2 13.5 15.6Z" fill="#90b8e0" stroke="#303030" stroke-width=".5"/><ellipse cx="9.2" cy="8.6" rx="2.1" ry="2.7" fill="#d0a070"/><path d="M7 8 Q7 5.6 9.4 5.7 Q11.6 5.9 11.4 8 Q9.4 6.8 7 8Z" fill="#3a3030"/><path d="M8.4 11 L10.2 11 L9.3 13.6Z" fill="#8a5a30"/></svg>
<div class="t" style="left:246.5px;top:296.84px;font-size:12px;color:#000;transform:scaleX(0.7966);transform-origin:0 0;">IIS_IUSRS</div>
<div class="t" style="left:380px;top:296.84px;font-size:12px;color:#000;transform:scaleX(1.0075);transform-origin:0 0;">Built-in group used by Internet Inf...</div>
<svg class="a" style="left:228px;top:313px" width="16" height="16" viewBox="0 0 16 16"><rect x="3.5" y="0.5" width="12" height="10" fill="#e2e0d4" stroke="#9a9a90" stroke-width=".7"/><rect x="5" y="2" width="9" height="7" fill="url(#gscr)"/><path d="M0.3 14.5 Q0 9.3 3.8 9 Q7.5 9.3 7.2 14.5Z" fill="#5c9c3c"/><path d="M3.4 9.3 L4.2 9.3 L4 13 Z" fill="#e8f0e0"/><ellipse cx="3.9" cy="6.3" rx="2" ry="2.6" fill="#e8c090"/><path d="M1.6 5.6 Q1.8 3.2 4 3.3 Q6 3.4 6.1 5.3 Q4 4.2 1.6 5.6Z" fill="#c8b858"/><path d="M1.5 5.2 Q1 7.5 2.2 8.3" stroke="#202020" stroke-width=".9" fill="none"/><path d="M5.6 15.6 Q5.3 11.2 9.4 11 Q13.7 11.2 13.5 15.6Z" fill="#90b8e0" stroke="#303030" stroke-width=".5"/><ellipse cx="9.2" cy="8.6" rx="2.1" ry="2.7" fill="#d0a070"/><path d="M7 8 Q7 5.6 9.4 5.7 Q11.6 5.9 11.4 8 Q9.4 6.8 7 8Z" fill="#3a3030"/><path d="M8.4 11 L10.2 11 L9.3 13.6Z" fill="#8a5a30"/></svg>
<div class="t" style="left:246.5px;top:315.84px;font-size:12px;color:#000;transform:scaleX(1.0149);transform-origin:0 0;">Network Configuratio...</div>
<div class="t" style="left:380px;top:315.84px;font-size:12px;color:#000;transform:scaleX(0.9878);transform-origin:0 0;">Members in this group can have s...</div>
<svg class="a" style="left:228px;top:332px" width="16" height="16" viewBox="0 0 16 16"><rect x="3.5" y="0.5" width="12" height="10" fill="#e2e0d4" stroke="#9a9a90" stroke-width=".7"/><rect x="5" y="2" width="9" height="7" fill="url(#gscr)"/><path d="M0.3 14.5 Q0 9.3 3.8 9 Q7.5 9.3 7.2 14.5Z" fill="#5c9c3c"/><path d="M3.4 9.3 L4.2 9.3 L4 13 Z" fill="#e8f0e0"/><ellipse cx="3.9" cy="6.3" rx="2" ry="2.6" fill="#e8c090"/><path d="M1.6 5.6 Q1.8 3.2 4 3.3 Q6 3.4 6.1 5.3 Q4 4.2 1.6 5.6Z" fill="#c8b858"/><path d="M1.5 5.2 Q1 7.5 2.2 8.3" stroke="#202020" stroke-width=".9" fill="none"/><path d="M5.6 15.6 Q5.3 11.2 9.4 11 Q13.7 11.2 13.5 15.6Z" fill="#90b8e0" stroke="#303030" stroke-width=".5"/><ellipse cx="9.2" cy="8.6" rx="2.1" ry="2.7" fill="#d0a070"/><path d="M7 8 Q7 5.6 9.4 5.7 Q11.6 5.9 11.4 8 Q9.4 6.8 7 8Z" fill="#3a3030"/><path d="M8.4 11 L10.2 11 L9.3 13.6Z" fill="#8a5a30"/></svg>
<div class="t" style="left:246.5px;top:334.84px;font-size:12px;color:#000;transform:scaleX(0.9643);transform-origin:0 0;">Performance Log Users</div>
<div class="t" style="left:380px;top:334.84px;font-size:12px;color:#000;transform:scaleX(0.9962);transform-origin:0 0;">Members of this group may sche...</div>
<svg class="a" style="left:228px;top:351px" width="16" height="16" viewBox="0 0 16 16"><rect x="3.5" y="0.5" width="12" height="10" fill="#e2e0d4" stroke="#9a9a90" stroke-width=".7"/><rect x="5" y="2" width="9" height="7" fill="url(#gscr)"/><path d="M0.3 14.5 Q0 9.3 3.8 9 Q7.5 9.3 7.2 14.5Z" fill="#5c9c3c"/><path d="M3.4 9.3 L4.2 9.3 L4 13 Z" fill="#e8f0e0"/><ellipse cx="3.9" cy="6.3" rx="2" ry="2.6" fill="#e8c090"/><path d="M1.6 5.6 Q1.8 3.2 4 3.3 Q6 3.4 6.1 5.3 Q4 4.2 1.6 5.6Z" fill="#c8b858"/><path d="M1.5 5.2 Q1 7.5 2.2 8.3" stroke="#202020" stroke-width=".9" fill="none"/><path d="M5.6 15.6 Q5.3 11.2 9.4 11 Q13.7 11.2 13.5 15.6Z" fill="#90b8e0" stroke="#303030" stroke-width=".5"/><ellipse cx="9.2" cy="8.6" rx="2.1" ry="2.7" fill="#d0a070"/><path d="M7 8 Q7 5.6 9.4 5.7 Q11.6 5.9 11.4 8 Q9.4 6.8 7 8Z" fill="#3a3030"/><path d="M8.4 11 L10.2 11 L9.3 13.6Z" fill="#8a5a30"/></svg>
<div class="t" style="left:246.5px;top:353.84px;font-size:12px;color:#000;transform:scaleX(1.0016);transform-origin:0 0;">Performance Monitor ...</div>
<div class="t" style="left:380px;top:353.84px;font-size:12px;color:#000;transform:scaleX(0.9892);transform-origin:0 0;">Members of this group can acces...</div>
<svg class="a" style="left:228px;top:370px" width="16" height="16" viewBox="0 0 16 16"><rect x="3.5" y="0.5" width="12" height="10" fill="#e2e0d4" stroke="#9a9a90" stroke-width=".7"/><rect x="5" y="2" width="9" height="7" fill="url(#gscr)"/><path d="M0.3 14.5 Q0 9.3 3.8 9 Q7.5 9.3 7.2 14.5Z" fill="#5c9c3c"/><path d="M3.4 9.3 L4.2 9.3 L4 13 Z" fill="#e8f0e0"/><ellipse cx="3.9" cy="6.3" rx="2" ry="2.6" fill="#e8c090"/><path d="M1.6 5.6 Q1.8 3.2 4 3.3 Q6 3.4 6.1 5.3 Q4 4.2 1.6 5.6Z" fill="#c8b858"/><path d="M1.5 5.2 Q1 7.5 2.2 8.3" stroke="#202020" stroke-width=".9" fill="none"/><path d="M5.6 15.6 Q5.3 11.2 9.4 11 Q13.7 11.2 13.5 15.6Z" fill="#90b8e0" stroke="#303030" stroke-width=".5"/><ellipse cx="9.2" cy="8.6" rx="2.1" ry="2.7" fill="#d0a070"/><path d="M7 8 Q7 5.6 9.4 5.7 Q11.6 5.9 11.4 8 Q9.4 6.8 7 8Z" fill="#3a3030"/><path d="M8.4 11 L10.2 11 L9.3 13.6Z" fill="#8a5a30"/></svg>
<div class="t" style="left:246.5px;top:372.84px;font-size:12px;color:#000;transform:scaleX(0.9309);transform-origin:0 0;">Power Users</div>
<div class="t" style="left:380px;top:372.84px;font-size:12px;color:#000;transform:scaleX(0.9724);transform-origin:0 0;">Power Users are included for back...</div>
<svg class="a" style="left:228px;top:389px" width="16" height="16" viewBox="0 0 16 16"><rect x="3.5" y="0.5" width="12" height="10" fill="#e2e0d4" stroke="#9a9a90" stroke-width=".7"/><rect x="5" y="2" width="9" height="7" fill="url(#gscr)"/><path d="M0.3 14.5 Q0 9.3 3.8 9 Q7.5 9.3 7.2 14.5Z" fill="#5c9c3c"/><path d="M3.4 9.3 L4.2 9.3 L4 13 Z" fill="#e8f0e0"/><ellipse cx="3.9" cy="6.3" rx="2" ry="2.6" fill="#e8c090"/><path d="M1.6 5.6 Q1.8 3.2 4 3.3 Q6 3.4 6.1 5.3 Q4 4.2 1.6 5.6Z" fill="#c8b858"/><path d="M1.5 5.2 Q1 7.5 2.2 8.3" stroke="#202020" stroke-width=".9" fill="none"/><path d="M5.6 15.6 Q5.3 11.2 9.4 11 Q13.7 11.2 13.5 15.6Z" fill="#90b8e0" stroke="#303030" stroke-width=".5"/><ellipse cx="9.2" cy="8.6" rx="2.1" ry="2.7" fill="#d0a070"/><path d="M7 8 Q7 5.6 9.4 5.7 Q11.6 5.9 11.4 8 Q9.4 6.8 7 8Z" fill="#3a3030"/><path d="M8.4 11 L10.2 11 L9.3 13.6Z" fill="#8a5a30"/></svg>
<div class="t" style="left:246.5px;top:391.84px;font-size:12px;color:#000;transform:scaleX(0.9716);transform-origin:0 0;">Print Operators</div>
<div class="t" style="left:380px;top:391.84px;font-size:12px;color:#000;transform:scaleX(0.9925);transform-origin:0 0;">Members can administer printers ...</div>
<svg class="a" style="left:228px;top:408px" width="16" height="16" viewBox="0 0 16 16"><rect x="3.5" y="0.5" width="12" height="10" fill="#e2e0d4" stroke="#9a9a90" stroke-width=".7"/><rect x="5" y="2" width="9" height="7" fill="url(#gscr)"/><path d="M0.3 14.5 Q0 9.3 3.8 9 Q7.5 9.3 7.2 14.5Z" fill="#5c9c3c"/><path d="M3.4 9.3 L4.2 9.3 L4 13 Z" fill="#e8f0e0"/><ellipse cx="3.9" cy="6.3" rx="2" ry="2.6" fill="#e8c090"/><path d="M1.6 5.6 Q1.8 3.2 4 3.3 Q6 3.4 6.1 5.3 Q4 4.2 1.6 5.6Z" fill="#c8b858"/><path d="M1.5 5.2 Q1 7.5 2.2 8.3" stroke="#202020" stroke-width=".9" fill="none"/><path d="M5.6 15.6 Q5.3 11.2 9.4 11 Q13.7 11.2 13.5 15.6Z" fill="#90b8e0" stroke="#303030" stroke-width=".5"/><ellipse cx="9.2" cy="8.6" rx="2.1" ry="2.7" fill="#d0a070"/><path d="M7 8 Q7 5.6 9.4 5.7 Q11.6 5.9 11.4 8 Q9.4 6.8 7 8Z" fill="#3a3030"/><path d="M8.4 11 L10.2 11 L9.3 13.6Z" fill="#8a5a30"/></svg>
<div class="t" style="left:246.5px;top:410.84px;font-size:12px;color:#000;transform:scaleX(0.9233);transform-origin:0 0;">RDS Endpoint Servers</div>
<div class="t" style="left:380px;top:410.84px;font-size:12px;color:#000;transform:scaleX(0.9931);transform-origin:0 0;">Servers in this group run virtual m...</div>
<svg class="a" style="left:228px;top:427px" width="16" height="16" viewBox="0 0 16 16"><rect x="3.5" y="0.5" width="12" height="10" fill="#e2e0d4" stroke="#9a9a90" stroke-width=".7"/><rect x="5" y="2" width="9" height="7" fill="url(#gscr)"/><path d="M0.3 14.5 Q0 9.3 3.8 9 Q7.5 9.3 7.2 14.5Z" fill="#5c9c3c"/><path d="M3.4 9.3 L4.2 9.3 L4 13 Z" fill="#e8f0e0"/><ellipse cx="3.9" cy="6.3" rx="2" ry="2.6" fill="#e8c090"/><path d="M1.6 5.6 Q1.8 3.2 4 3.3 Q6 3.4 6.1 5.3 Q4 4.2 1.6 5.6Z" fill="#c8b858"/><path d="M1.5 5.2 Q1 7.5 2.2 8.3" stroke="#202020" stroke-width=".9" fill="none"/><path d="M5.6 15.6 Q5.3 11.2 9.4 11 Q13.7 11.2 13.5 15.6Z" fill="#90b8e0" stroke="#303030" stroke-width=".5"/><ellipse cx="9.2" cy="8.6" rx="2.1" ry="2.7" fill="#d0a070"/><path d="M7 8 Q7 5.6 9.4 5.7 Q11.6 5.9 11.4 8 Q9.4 6.8 7 8Z" fill="#3a3030"/><path d="M8.4 11 L10.2 11 L9.3 13.6Z" fill="#8a5a30"/></svg>
<div class="t" style="left:246.5px;top:429.84px;font-size:12px;color:#000;transform:scaleX(0.9426);transform-origin:0 0;">RDS Management Ser...</div>
<div class="t" style="left:380px;top:429.84px;font-size:12px;color:#000;transform:scaleX(0.9826);transform-origin:0 0;">Servers in this group can perform ...</div>
<svg class="a" style="left:228px;top:446px" width="16" height="16" viewBox="0 0 16 16"><rect x="3.5" y="0.5" width="12" height="10" fill="#e2e0d4" stroke="#9a9a90" stroke-width=".7"/><rect x="5" y="2" width="9" height="7" fill="url(#gscr)"/><path d="M0.3 14.5 Q0 9.3 3.8 9 Q7.5 9.3 7.2 14.5Z" fill="#5c9c3c"/><path d="M3.4 9.3 L4.2 9.3 L4 13 Z" fill="#e8f0e0"/><ellipse cx="3.9" cy="6.3" rx="2" ry="2.6" fill="#e8c090"/><path d="M1.6 5.6 Q1.8 3.2 4 3.3 Q6 3.4 6.1 5.3 Q4 4.2 1.6 5.6Z" fill="#c8b858"/><path d="M1.5 5.2 Q1 7.5 2.2 8.3" stroke="#202020" stroke-width=".9" fill="none"/><path d="M5.6 15.6 Q5.3 11.2 9.4 11 Q13.7 11.2 13.5 15.6Z" fill="#90b8e0" stroke="#303030" stroke-width=".5"/><ellipse cx="9.2" cy="8.6" rx="2.1" ry="2.7" fill="#d0a070"/><path d="M7 8 Q7 5.6 9.4 5.7 Q11.6 5.9 11.4 8 Q9.4 6.8 7 8Z" fill="#3a3030"/><path d="M8.4 11 L10.2 11 L9.3 13.6Z" fill="#8a5a30"/></svg>
<div class="t" style="left:246.5px;top:448.84px;font-size:12px;color:#000;transform:scaleX(0.9174);transform-origin:0 0;">RDS Remote Access S...</div>
<div class="t" style="left:380px;top:448.84px;font-size:12px;color:#000;transform:scaleX(0.9567);transform-origin:0 0;">Servers in this group enable users ...</div>
<div class="a" style="left:244px;top:464px;width:330px;height:19px;background:#f0f0f0;"></div>
<svg class="a" style="left:228px;top:465px" width="16" height="16" viewBox="0 0 16 16"><g filter="url(#tint)"><rect x="3.5" y="0.5" width="12" height="10" fill="#e2e0d4" stroke="#9a9a90" stroke-width=".7"/><rect x="5" y="2" width="9" height="7" fill="url(#gscr)"/><path d="M0.3 14.5 Q0 9.3 3.8 9 Q7.5 9.3 7.2 14.5Z" fill="#5c9c3c"/><path d="M3.4 9.3 L4.2 9.3 L4 13 Z" fill="#e8f0e0"/><ellipse cx="3.9" cy="6.3" rx="2" ry="2.6" fill="#e8c090"/><path d="M1.6 5.6 Q1.8 3.2 4 3.3 Q6 3.4 6.1 5.3 Q4 4.2 1.6 5.6Z" fill="#c8b858"/><path d="M1.5 5.2 Q1 7.5 2.2 8.3" stroke="#202020" stroke-width=".9" fill="none"/><path d="M5.6 15.6 Q5.3 11.2 9.4 11 Q13.7 11.2 13.5 15.6Z" fill="#90b8e0" stroke="#303030" stroke-width=".5"/><ellipse cx="9.2" cy="8.6" rx="2.1" ry="2.7" fill="#d0a070"/><path d="M7 8 Q7 5.6 9.4 5.7 Q11.6 5.9 11.4 8 Q9.4 6.8 7 8Z" fill="#3a3030"/><path d="M8.4 11 L10.2 11 L9.3 13.6Z" fill="#8a5a30"/></g></svg>
<div class="t" style="left:246.5px;top:467.84px;font-size:12px;color:#000;transform:scaleX(0.9452);transform-origin:0 0;">Remote Desktop Users</div>
<div class="t" style="left:380px;top:467.84px;font-size:12px;color:#000;transform:scaleX(0.9978);transform-origin:0 0;">Members in this group are grante...</div>
<svg class="a" style="left:228px;top:484px" width="16" height="16" viewBox="0 0 16 16"><rect x="3.5" y="0.5" width="12" height="10" fill="#e2e0d4" stroke="#9a9a90" stroke-width=".7"/><rect x="5" y="2" width="9" height="7" fill="url(#gscr)"/><path d="M0.3 14.5 Q0 9.3 3.8 9 Q7.5 9.3 7.2 14.5Z" fill="#5c9c3c"/><path d="M3.4 9.3 L4.2 9.3 L4 13 Z" fill="#e8f0e0"/><ellipse cx="3.9" cy="6.3" rx="2" ry="2.6" fill="#e8c090"/><path d="M1.6 5.6 Q1.8 3.2 4 3.3 Q6 3.4 6.1 5.3 Q4 4.2 1.6 5.6Z" fill="#c8b858"/><path d="M1.5 5.2 Q1 7.5 2.2 8.3" stroke="#202020" stroke-width=".9" fill="none"/><path d="M5.6 15.6 Q5.3 11.2 9.4 11 Q13.7 11.2 13.5 15.6Z" fill="#90b8e0" stroke="#303030" stroke-width=".5"/><ellipse cx="9.2" cy="8.6" rx="2.1" ry="2.7" fill="#d0a070"/><path d="M7 8 Q7 5.6 9.4 5.7 Q11.6 5.9 11.4 8 Q9.4 6.8 7 8Z" fill="#3a3030"/><path d="M8.4 11 L10.2 11 L9.3 13.6Z" fill="#8a5a30"/></svg>
<div class="t" style="left:246.5px;top:486.84px;font-size:12px;color:#000;transform:scaleX(0.9871);transform-origin:0 0;">Remote Management...</div>
<div class="t" style="left:380px;top:486.84px;font-size:12px;color:#000;transform:scaleX(0.9898);transform-origin:0 0;">Members of this group can acces...</div>
<svg class="a" style="left:228px;top:503px" width="16" height="16" viewBox="0 0 16 16"><rect x="3.5" y="0.5" width="12" height="10" fill="#e2e0d4" stroke="#9a9a90" stroke-width=".7"/><rect x="5" y="2" width="9" height="7" fill="url(#gscr)"/><path d="M0.3 14.5 Q0 9.3 3.8 9 Q7.5 9.3 7.2 14.5Z" fill="#5c9c3c"/><path d="M3.4 9.3 L4.2 9.3 L4 13 Z" fill="#e8f0e0"/><ellipse cx="3.9" cy="6.3" rx="2" ry="2.6" fill="#e8c090"/><path d="M1.6 5.6 Q1.8 3.2 4 3.3 Q6 3.4 6.1 5.3 Q4 4.2 1.6 5.6Z" fill="#c8b858"/><path d="M1.5 5.2 Q1 7.5 2.2 8.3" stroke="#202020" stroke-width=".9" fill="none"/><path d="M5.6 15.6 Q5.3 11.2 9.4 11 Q13.7 11.2 13.5 15.6Z" fill="#90b8e0" stroke="#303030" stroke-width=".5"/><ellipse cx="9.2" cy="8.6" rx="2.1" ry="2.7" fill="#d0a070"/><path d="M7 8 Q7 5.6 9.4 5.7 Q11.6 5.9 11.4 8 Q9.4 6.8 7 8Z" fill="#3a3030"/><path d="M8.4 11 L10.2 11 L9.3 13.6Z" fill="#8a5a30"/></svg>
<div class="t" style="left:246.5px;top:505.84px;font-size:12px;color:#000;transform:scaleX(0.9648);transform-origin:0 0;">Replicator</div>
<div class="t" style="left:380px;top:505.84px;font-size:12px;color:#000;transform:scaleX(1.006);transform-origin:0 0;">Supports file replication in a dom...</div>
<svg class="a" style="left:228px;top:522px" width="16" height="16" viewBox="0 0 16 16"><rect x="3.5" y="0.5" width="12" height="10" fill="#e2e0d4" stroke="#9a9a90" stroke-width=".7"/><rect x="5" y="2" width="9" height="7" fill="url(#gscr)"/><path d="M0.3 14.5 Q0 9.3 3.8 9 Q7.5 9.3 7.2 14.5Z" fill="#5c9c3c"/><path d="M3.4 9.3 L4.2 9.3 L4 13 Z" fill="#e8f0e0"/><ellipse cx="3.9" cy="6.3" rx="2" ry="2.6" fill="#e8c090"/><path d="M1.6 5.6 Q1.8 3.2 4 3.3 Q6 3.4 6.1 5.3 Q4 4.2 1.6 5.6Z" fill="#c8b858"/><path d="M1.5 5.2 Q1 7.5 2.2 8.3" stroke="#202020" stroke-width=".9" fill="none"/><path d="M5.6 15.6 Q5.3 11.2 9.4 11 Q13.7 11.2 13.5 15.6Z" fill="#90b8e0" stroke="#303030" stroke-width=".5"/><ellipse cx="9.2" cy="8.6" rx="2.1" ry="2.7" fill="#d0a070"/><path d="M7 8 Q7 5.6 9.4 5.7 Q11.6 5.9 11.4 8 Q9.4 6.8 7 8Z" fill="#3a3030"/><path d="M8.4 11 L10.2 11 L9.3 13.6Z" fill="#8a5a30"/></svg>
<div class="t" style="left:246.5px;top:524.84px;font-size:12px;color:#000;transform:scaleX(0.9766);transform-origin:0 0;">Storage Replica Admi...</div>
<div class="t" style="left:380px;top:524.84px;font-size:12px;color:#000;transform:scaleX(1.0005);transform-origin:0 0;">Members of this group have com...</div>
<svg class="a" style="left:228px;top:541px" width="16" height="16" viewBox="0 0 16 16"><rect x="3.5" y="0.5" width="12" height="10" fill="#e2e0d4" stroke="#9a9a90" stroke-width=".7"/><rect x="5" y="2" width="9" height="7" fill="url(#gscr)"/><path d="M0.3 14.5 Q0 9.3 3.8 9 Q7.5 9.3 7.2 14.5Z" fill="#5c9c3c"/><path d="M3.4 9.3 L4.2 9.3 L4 13 Z" fill="#e8f0e0"/><ellipse cx="3.9" cy="6.3" rx="2" ry="2.6" fill="#e8c090"/><path d="M1.6 5.6 Q1.8 3.2 4 3.3 Q6 3.4 6.1 5.3 Q4 4.2 1.6 5.6Z" fill="#c8b858"/><path d="M1.5 5.2 Q1 7.5 2.2 8.3" stroke="#202020" stroke-width=".9" fill="none"/><path d="M5.6 15.6 Q5.3 11.2 9.4 11 Q13.7 11.2 13.5 15.6Z" fill="#90b8e0" stroke="#303030" stroke-width=".5"/><ellipse cx="9.2" cy="8.6" rx="2.1" ry="2.7" fill="#d0a070"/><path d="M7 8 Q7 5.6 9.4 5.7 Q11.6 5.9 11.4 8 Q9.4 6.8 7 8Z" fill="#3a3030"/><path d="M8.4 11 L10.2 11 L9.3 13.6Z" fill="#8a5a30"/></svg>
<div class="t" style="left:246.5px;top:543.84px;font-size:12px;color:#000;transform:scaleX(0.9728);transform-origin:0 0;">System Managed Acc...</div>
<div class="t" style="left:380px;top:543.84px;font-size:12px;color:#000;transform:scaleX(0.9973);transform-origin:0 0;">Members of this group are mana...</div>
<svg class="a" style="left:228px;top:560px" width="16" height="16" viewBox="0 0 16 16"><rect x="3.5" y="0.5" width="12" height="10" fill="#e2e0d4" stroke="#9a9a90" stroke-width=".7"/><rect x="5" y="2" width="9" height="7" fill="url(#gscr)"/><path d="M0.3 14.5 Q0 9.3 3.8 9 Q7.5 9.3 7.2 14.5Z" fill="#5c9c3c"/><path d="M3.4 9.3 L4.2 9.3 L4 13 Z" fill="#e8f0e0"/><ellipse cx="3.9" cy="6.3" rx="2" ry="2.6" fill="#e8c090"/><path d="M1.6 5.6 Q1.8 3.2 4 3.3 Q6 3.4 6.1 5.3 Q4 4.2 1.6 5.6Z" fill="#c8b858"/><path d="M1.5 5.2 Q1 7.5 2.2 8.3" stroke="#202020" stroke-width=".9" fill="none"/><path d="M5.6 15.6 Q5.3 11.2 9.4 11 Q13.7 11.2 13.5 15.6Z" fill="#90b8e0" stroke="#303030" stroke-width=".5"/><ellipse cx="9.2" cy="8.6" rx="2.1" ry="2.7" fill="#d0a070"/><path d="M7 8 Q7 5.6 9.4 5.7 Q11.6 5.9 11.4 8 Q9.4 6.8 7 8Z" fill="#3a3030"/><path d="M8.4 11 L10.2 11 L9.3 13.6Z" fill="#8a5a30"/></svg>
<div class="t" style="left:246.5px;top:562.84px;font-size:12px;color:#000;transform:scaleX(0.8806);transform-origin:0 0;">Users</div>
<div class="t" style="left:380px;top:562.84px;font-size:12px;color:#000;transform:scaleX(0.9826);transform-origin:0 0;">Users are prevented from making ...</div>
<div class="a" style="left:825px;top:99px;width:186px;height:19px;background:#f0f0f0;"></div>
<div class="a" style="left:825px;top:118px;width:186px;height:1px;background:#7a7a7a;"></div>
<div class="t" style="left:830px;top:102.94px;font-size:12px;color:#000;font-weight:bold;-webkit-text-stroke:0transform:scaleX(0.93);transform-origin:0 0;">Actions</div>
<div class="a" style="left:825px;top:120px;width:186px;height:25px;background:linear-gradient(#bed4ec,#aac3e2)"></div>
<div class="t" style="left:832px;top:126.14px;font-size:12px;color:#000;">Groups</div>
<svg class="a" style="left:995px;top:130px" width="9" height="5" viewBox="0 0 9 5"><path d="M0 5L4.5 0L9 5Z" fill="#000"/></svg>
<svg class="a" style="left:998px;top:151px" width="5" height="10" viewBox="0 0 5 10"><path d="M0 0L5 5L0 10Z" fill="#000"/></svg>
<div class="a" style="left:825px;top:174px;width:186px;height:25px;background:linear-gradient(#bed4ec,#aac3e2)"></div>
<svg class="a" style="left:995px;top:184px" width="9" height="5" viewBox="0 0 9 5"><path d="M0 5L4.5 0L9 5Z" fill="#000"/></svg>
<svg class="a" style="left:998px;top:206px" width="5" height="10" viewBox="0 0 5 10"><path d="M0 0L5 5L0 10Z" fill="#000"/></svg>
<div class="a" style="left:599px;top:140px;width:400px;height:455px;background:#f0f0f0;border:1px solid #a0a0a0;"></div>
<div class="a" style="left:600px;top:141px;width:398px;height:30px;background:#fff;"></div>
<div class="t" style="left:608.5px;top:149.84px;font-size:12px;color:#999;-webkit-text-stroke:0transform:scaleX(0.95);transform-origin:0 0;">Remote Desktop Users Properties</div>
<div class="t" style="left:927px;top:149.00px;font-size:13px;color:#999;">?</div>
<svg class="a" style="left:970px;top:150px" width="10" height="10" viewBox="0 0 10 10"><path d="M0 0L10 10M10 0L0 10" stroke="#999" stroke-width="1"/></svg>
<div class="a" style="left:606px;top:198px;width:383px;height:359px;background:#fff;border:1px solid #d9d9d9;"></div>
<div class="a" style="left:606px;top:178px;width:53px;height:22px;background:#fff;border:1px solid #d9d9d9;border-bottom:none"></div>
<div class="t" style="left:613px;top:183.11px;font-size:10.5px;color:#000;-webkit-text-stroke:0;">General</div>
<svg class="a" style="left:620px;top:211px" width="32" height="32" viewBox="0 0 32 32"><path d="M5.5 1 L31 3.5 L31 25 L5.5 27Z" fill="#dcdcdc" stroke="#b8b8b8" stroke-width=".8"/><path d="M6.5 2.2 L28.5 4.2 L28.5 22.5 L6.5 24.2Z" fill="#0818c8"/><path d="M16.5 3.1 L28.5 4.2 L28.5 22.5 L20 23.2Z" fill="#a8b8ff"/><path d="M20 5 L27 5.6 L27 21 L22 21.5Z" fill="#c8d4ff" opacity=".7"/><path d="M31 4 L32 5 L32 25 L31 26Z" fill="#909090"/><path d="M0.5 28.5 Q0.5 20.5 6.5 20.5 Q12.5 20.5 12.5 28.5Z" fill="#78b058"/><path d="M6 20.6 L7.2 20.6 L6.8 27Z" fill="#e8f4ff"/><ellipse cx="7" cy="16" rx="3.6" ry="4.6" fill="#e8c49a"/><path d="M3.3 15 Q3 10.5 7 10.5 Q11 10.5 10.8 14 Q7.5 12.5 3.3 15Z" fill="#d8c068"/><path d="M9.5 31.5 Q9 23 16.5 23 Q24 23 23.5 31.5Z" fill="#a8cce8" stroke="#606870" stroke-width=".6"/><ellipse cx="16" cy="18.5" rx="3.8" ry="4.8" fill="#c89060"/><path d="M12 17.5 Q12 12.8 16.2 13 Q20.5 13.2 20 17 Q16 15.2 12 17.5Z" fill="#404048"/><path d="M13.5 21.5 Q16 24.5 18.5 21.5 L18 23.5 Q16 25.5 14 23.5Z" fill="#7a4a20"/><path d="M15 23.5 L17 23.5 L16 27Z" fill="#f4f8ff"/></svg>
<div class="t" style="left:670.5px;top:221.61px;font-size:10.5px;color:#000;-webkit-text-stroke:0;">Remote Desktop Users</div>
<div class="a" style="left:620px;top:255px;width:357px;height:1px;background:#a0a0a0;"></div>
<div class="t" style="left:621px;top:274.11px;font-size:10.5px;color:#000;-webkit-text-stroke:0;">Description:</div>
<div class="a" style="left:708px;top:268px;width:270px;height:34px;background:#fff;border:1px solid #7a7a7a;"></div>
<div class="t" style="left:711px;top:273.11px;font-size:10.5px;color:#000;-webkit-text-stroke:0;">Members in this group are granted the right to logon</div>
<div class="t" style="left:711px;top:286.11px;font-size:10.5px;color:#000;-webkit-text-stroke:0;">remotely</div>
<div class="t" style="left:621px;top:316.11px;font-size:10.5px;color:#000;-webkit-text-stroke:0;">Members:</div>
<div class="a" style="left:621px;top:333px;width:357px;height:172px;background:#fff;border:1px solid #828790;"></div>
<div class="a" style="left:622px;top:521px;width:73px;height:21px;background:#e1e1e1;border:1px solid #adadad;"></div>
<div class="t" style="left:622px;top:526.55px;width:73px;text-align:center;font-size:10.5px;color:#000;-webkit-text-stroke:0">Add...</div>
<div class="a" style="left:703px;top:521px;width:73px;height:21px;background:#cccccc;border:1px solid #bfbfbf;"></div>
<div class="t" style="left:703px;top:526.55px;width:73px;text-align:center;font-size:10.5px;color:#838383;-webkit-text-stroke:0">Remove</div>
<div class="t" style="left:786.5px;top:512.31px;font-size:10.5px;color:#000;-webkit-text-stroke:0;">Changes to a user's group membership</div>
<div class="t" style="left:786.5px;top:525.31px;font-size:10.5px;color:#000;-webkit-text-stroke:0;">are not effective until the next time the</div>
<div class="t" style="left:786.5px;top:538.31px;font-size:10.5px;color:#000;-webkit-text-stroke:0;">user logs on.</div>
<div class="a" style="left:675px;top:565px;width:73px;height:21px;background:#e1e1e1;border:1px solid #adadad;"></div>
<div class="t" style="left:675px;top:570.55px;width:73px;text-align:center;font-size:10.5px;color:#000;-webkit-text-stroke:0">OK</div>
<div class="a" style="left:756px;top:565px;width:73px;height:21px;background:#e1e1e1;border:1px solid #adadad;"></div>
<div class="t" style="left:756px;top:570.55px;width:73px;text-align:center;font-size:10.5px;color:#000;-webkit-text-stroke:0">Cancel</div>
<div class="a" style="left:837px;top:565px;width:73px;height:21px;background:#e1e1e1;border:1px solid #adadad;"></div>
<div class="t" style="left:837px;top:570.55px;width:73px;text-align:center;font-size:10.5px;color:#000;-webkit-text-stroke:0">Apply</div>
<div class="a" style="left:918px;top:565px;width:73px;height:21px;background:#e1e1e1;border:1px solid #adadad;"></div>
<div class="t" style="left:918px;top:570.55px;width:73px;text-align:center;font-size:10.5px;color:#000;-webkit-text-stroke:0">Help</div>
<div class="a" style="left:339px;top:618px;width:458px;height:252px;background:#f0f0f0;border:1px solid #a0a0a0;"></div>
<div class="a" style="left:340px;top:619px;width:456px;height:30px;background:#fff;"></div>
<div class="t" style="left:348.4px;top:628.24px;font-size:12px;color:#000;transform:scaleX(0.91);transform-origin:0 0;">Select Users</div>
<svg class="a" style="left:776px;top:628px" width="10" height="10" viewBox="0 0 10 10"><path d="M0 0L10 10M10 0L0 10" stroke="#000" stroke-width="1"/></svg>
<div class="t" style="left:351px;top:662.11px;font-size:10.5px;color:#000;-webkit-text-stroke:0;">Select this object type:</div>
<div class="a" style="left:351px;top:677px;width:338px;height:23px;background:#f0f0f0;border:1px solid #7a7a7a;box-shadow:inset 0 0 0 1px #fff"></div>
<div class="t" style="left:354.6px;top:682.71px;font-size:10.5px;color:#000;-webkit-text-stroke:0;">Users or Built-in security principals</div>
<div class="a" style="left:696px;top:678px;width:88px;height:21px;background:#e1e1e1;border:1px solid #adadad;"></div>
<div class="t" style="left:696px;top:683.55px;width:88px;text-align:center;font-size:10.5px;color:#000;-webkit-text-stroke:0">Object Types...</div>
<div class="t" style="left:351px;top:708.11px;font-size:10.5px;color:#000;-webkit-text-stroke:0;">From this location:</div>
<div class="a" style="left:351px;top:722px;width:338px;height:23px;background:#f0f0f0;border:1px solid #7a7a7a;box-shadow:inset 0 0 0 1px #fff"></div>
<div class="t" style="left:354.6px;top:727.31px;font-size:10.5px;color:#000;-webkit-text-stroke:0;">WIN-GG1KDDCU7FT</div>
<div class="a" style="left:696px;top:723px;width:88px;height:21px;background:#e1e1e1;border:1px solid #adadad;"></div>
<div class="t" style="left:696px;top:728.55px;width:88px;text-align:center;font-size:10.5px;color:#000;-webkit-text-stroke:0">Locations...</div>
<div class="t" style="left:351px;top:758.11px;font-size:10.5px;color:#000;-webkit-text-stroke:0;"><u>E</u>nter the object names to select (<span style="color:#0066cc;text-decoration:underline">examples</span>):</div>
<div class="a" style="left:351px;top:773px;width:338px;height:57px;background:#fff;border-top:1px solid #a0a0a0;border-left:1px solid #a0a0a0;border-right:1px solid #fff;border-bottom:1px solid #fff"></div>
<div class="a" style="left:352px;top:774px;width:336px;height:55px;border-top:1px solid #696969;border-left:1px solid #696969;border-right:1px solid #e3e3e3;border-bottom:1px solid #e3e3e3"></div>
<div class="t" style="left:354px;top:777.71px;font-size:10.5px;color:#000;-webkit-text-stroke:0;transform:scaleX(1.035);transform-origin:0 0;"><u>WIN-GG1KDDCU7FT\Station_1</u></div>
<div class="a" style="left:696px;top:774px;width:88px;height:21px;background:#e5f1fb;border:1px solid #0078d7;"></div>
<div class="t" style="left:696px;top:779.55px;width:88px;text-align:center;font-size:10.5px;color:#000;-webkit-text-stroke:0">Check Names</div>
<div class="a" style="left:352px;top:839px;width:88px;height:21px;background:#e1e1e1;border:1px solid #adadad;"></div>
<div class="t" style="left:352px;top:844.55px;width:88px;text-align:center;font-size:10.5px;color:#000;-webkit-text-stroke:0">Advanced...</div>
<div class="a" style="left:630px;top:839px;width:73px;height:21px;background:#e1e1e1;border:2px solid #0078d7;"></div>
<div class="t" style="left:630px;top:844.55px;width:73px;text-align:center;font-size:10.5px;color:#000;-webkit-text-stroke:0">OK</div>
<div class="a" style="left:711px;top:839px;width:73px;height:21px;background:#e1e1e1;border:1px solid #adadad;"></div>
<div class="t" style="left:711px;top:844.55px;width:73px;text-align:center;font-size:10.5px;color:#000;-webkit-text-stroke:0">Cancel</div>
<div class="a" style="left:791px;top:859px;width:2px;height:2px;background:#a6a6a6;"></div>
<div class="a" style="left:788px;top:862px;width:2px;height:2px;background:#a6a6a6;"></div>
<div class="a" style="left:791px;top:862px;width:2px;height:2px;background:#a6a6a6;"></div>
<div class="a" style="left:785px;top:865px;width:2px;height:2px;background:#a6a6a6;"></div>
<div class="a" style="left:788px;top:865px;width:2px;height:2px;background:#a6a6a6;"></div>
<div class="a" style="left:791px;top:865px;width:2px;height:2px;background:#a6a6a6;"></div>
</body></html>
